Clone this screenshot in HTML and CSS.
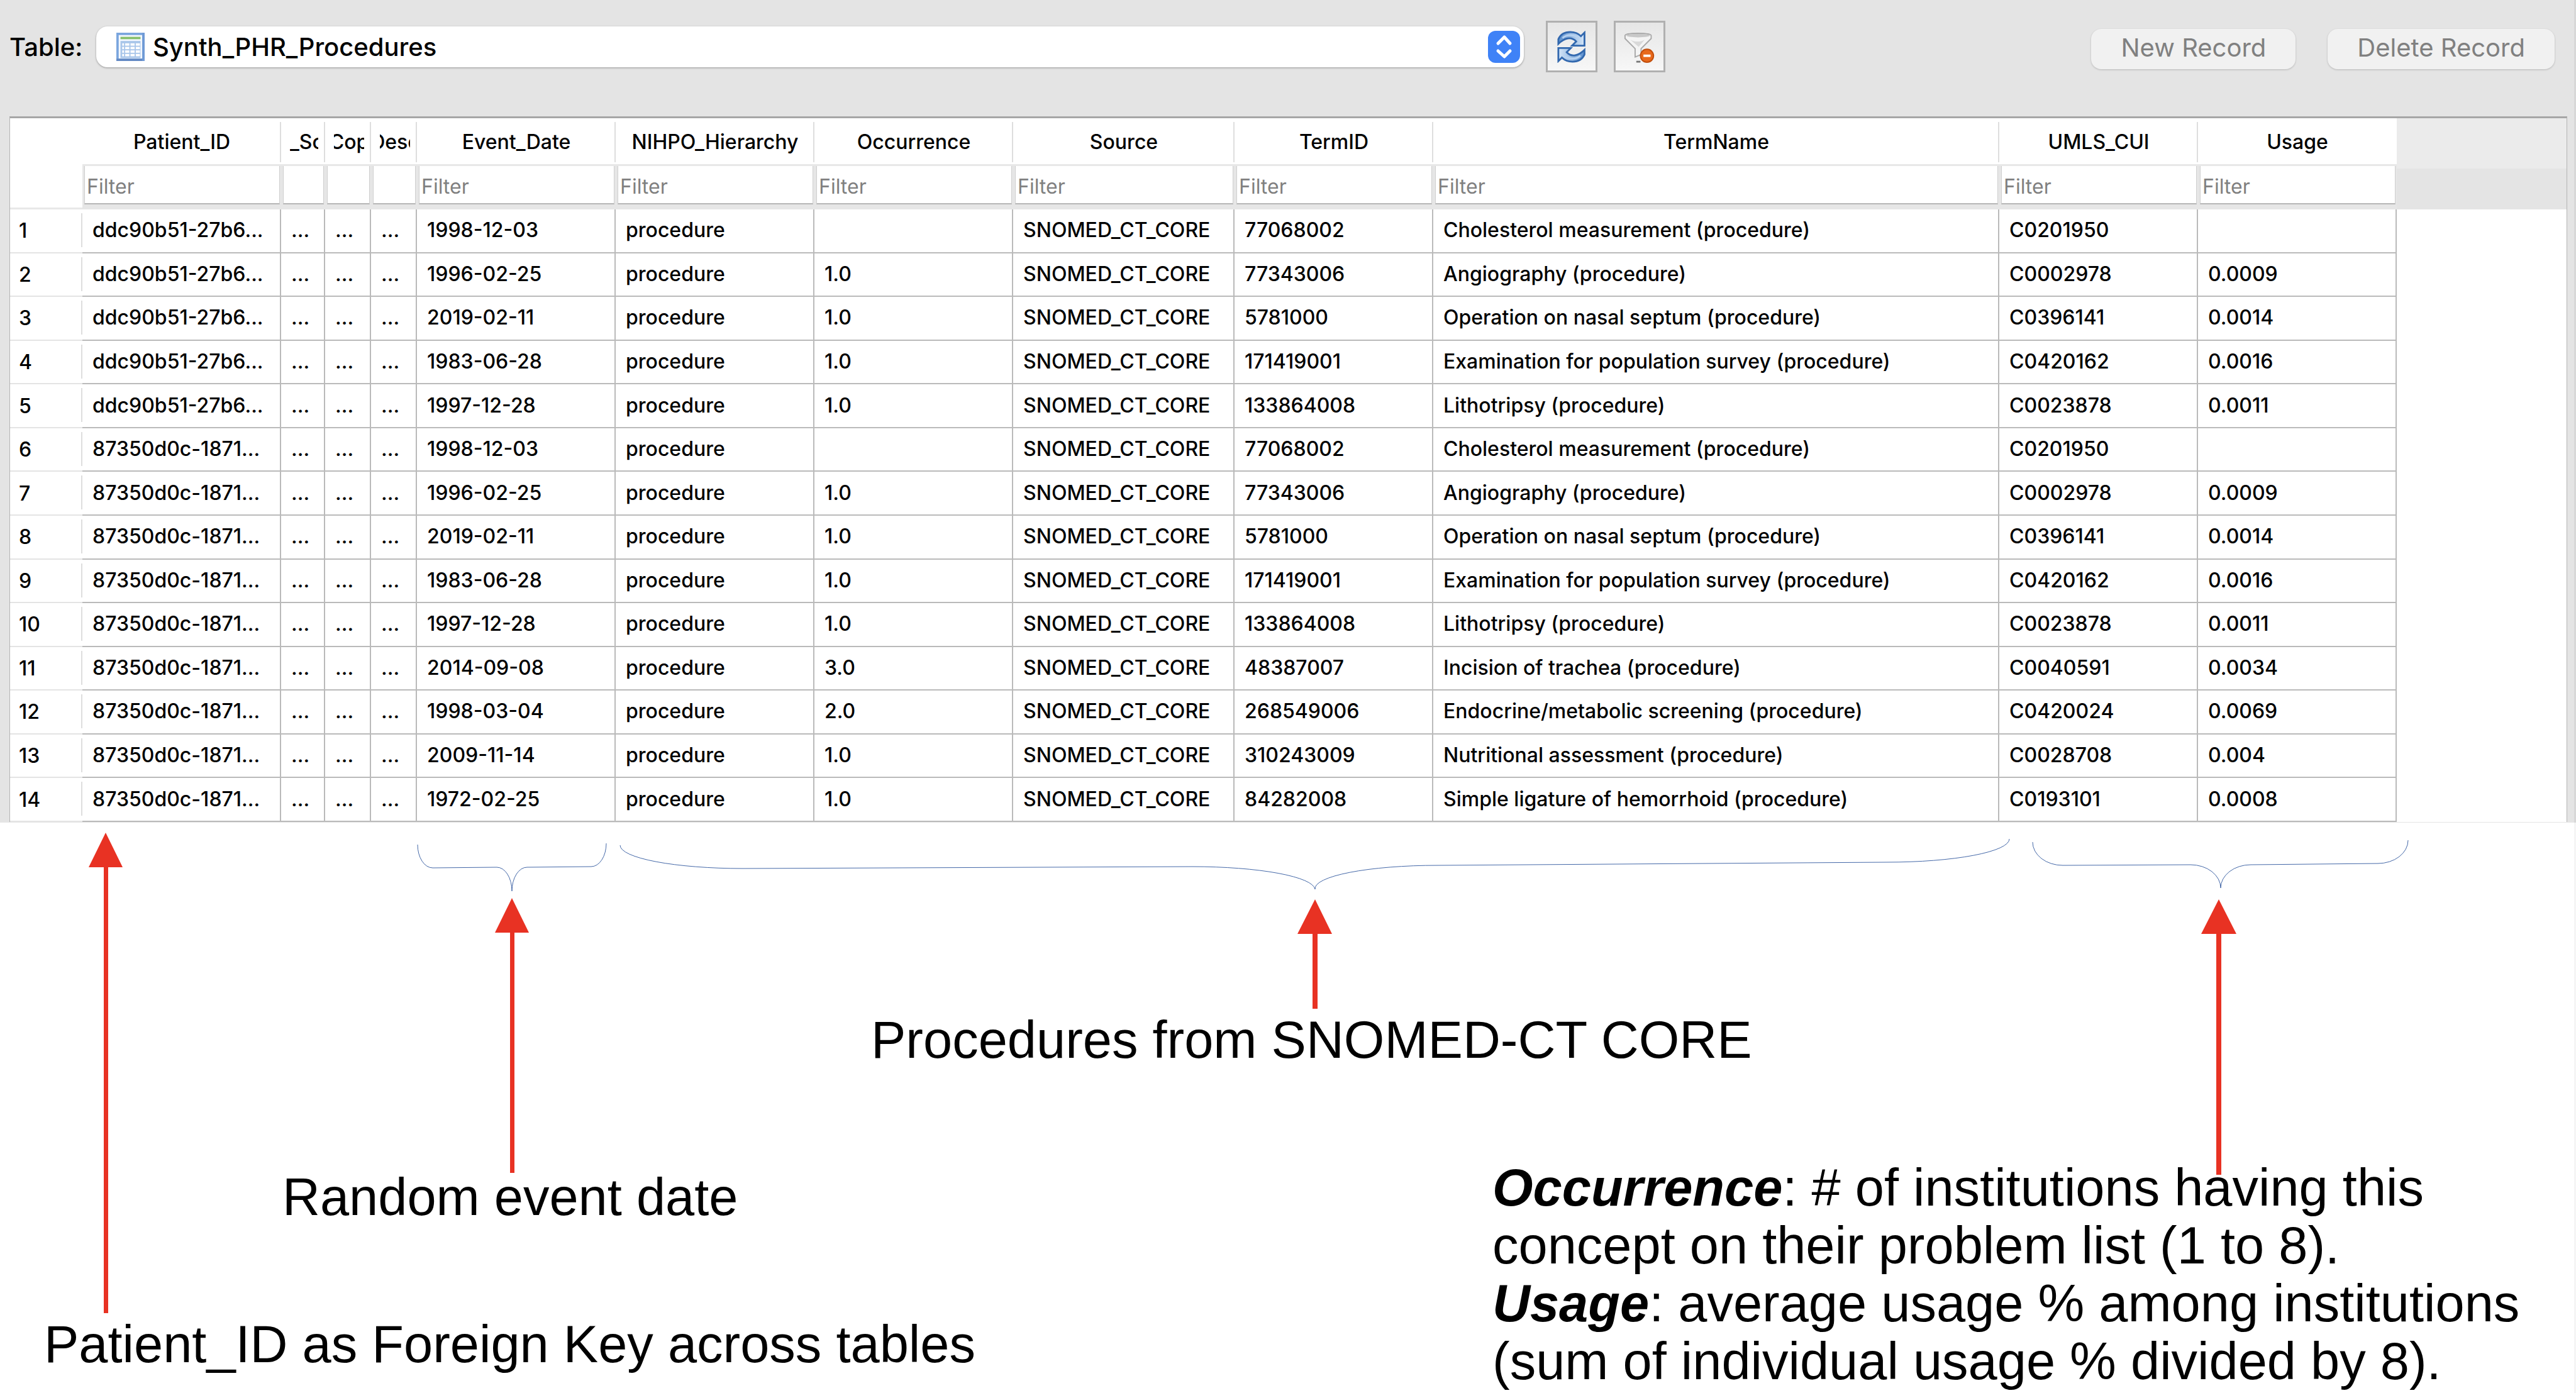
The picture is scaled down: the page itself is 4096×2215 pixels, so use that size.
FILE: index.html
```html
<!DOCTYPE html>
<html lang="en">
<head>
<meta charset="utf-8">
<title>Synth_PHR_Procedures</title>
<link rel="stylesheet" href="styles.css">
</head>
<body>
<main>
<section class="browser">
<div class="toolbar">
<label class="toolbar-label" for="table-select">Table:</label>
<div class="select-box">
<svg class="table-icon" viewBox="0 0 48 48" aria-hidden="true"><rect x="2" y="2" width="44" height="44" fill="#f4f8fd" stroke="#7ba6de" stroke-width="4"/><rect y="44" width="48" height="4" fill="#6389c4"/><rect x="44" width="4" height="48" fill="#6f9ad6"/><rect x="7" y="7" width="34" height="4" fill="#86c06c"/><rect x="7" y="14" width="34" height="29" fill="#a9c6ea"/><g fill="#fff"><rect x="10" y="18" width="3" height="4"/><rect x="15" y="18" width="7" height="4"/><rect x="24" y="18" width="7" height="4"/><rect x="33" y="18" width="7" height="4"/><rect x="10" y="24" width="3" height="4"/><rect x="15" y="24" width="7" height="4"/><rect x="24" y="24" width="7" height="4"/><rect x="33" y="24" width="7" height="4"/><rect x="10" y="30" width="3" height="4"/><rect x="15" y="30" width="7" height="4"/><rect x="24" y="30" width="7" height="4"/><rect x="33" y="30" width="7" height="4"/><rect x="10" y="36" width="3" height="4"/><rect x="15" y="36" width="7" height="4"/><rect x="24" y="36" width="7" height="4"/><rect x="33" y="36" width="7" height="4"/></g></svg>
<select class="table-select" id="table-select"><option>Synth_PHR_Procedures</option></select>
<svg class="select-arrows" viewBox="0 0 51 51" aria-hidden="true"><rect width="51" height="51" rx="12" fill="#3f82f7"/><path d="M16 20L26 10L35 20M16 32L26 41L35 32" fill="none" stroke="#fff" stroke-width="5" stroke-linecap="round" stroke-linejoin="round"/></svg>
</div>
<button class="tool-button" type="button" aria-label="Refresh"><svg viewBox="0 0 48 54" aria-hidden="true"><defs><linearGradient id="blue" x1="0" x2="1"><stop offset="0" stop-color="#5b8fcd"/><stop offset="1" stop-color="#d5e6f8"/></linearGradient><linearGradient id="blue-back" x1="1" x2="0"><stop offset="0" stop-color="#5b8fcd"/><stop offset="1" stop-color="#d5e6f8"/></linearGradient></defs><g stroke="#3268ae" stroke-width="3"><path d="M2 22V14C6 5 14 2 22 2C30 2 36 5 40 9L46 3V25H25L32 18C24 9 12 12 2 22Z" fill="url(#blue)"/><path d="M46 32V40C42 49 34 52 26 52C18 52 12 49 8 45L2 51V29H23L16 36C24 45 36 42 46 32Z" fill="url(#blue-back)"/></g><path d="M9 12C17 5 29 6 37 13M39 42C31 49 19 48 11 41" fill="none" stroke="#b7d2f0" stroke-width="3"/></svg></button>
<button class="tool-button" type="button" aria-label="Clear filters"><svg viewBox="0 0 52 54" aria-hidden="true"><path d="M2 8C2 3 46 3 46 8V13L29 30V40L19 44V30L2 13Z" fill="#f4f4f4" stroke="#a8a8a8" stroke-width="2"/><ellipse cx="24" cy="8" rx="20" ry="3" fill="#c8c8c8"/><path d="M11 15C18 19 28 19 35 15L25 27Z" fill="#d9d9d9"/><path d="M21 52H28" stroke="#777" stroke-width="3"/><circle cx="39" cy="42" r="11" fill="#e8691c" stroke="#c24e0c" stroke-width="2"/><rect x="33" y="40" width="12" height="4" fill="#fff"/></svg></button>
<div class="record-actions"><button class="record-button" type="button" disabled>New Record</button><button class="record-button" type="button" disabled>Delete Record</button></div>
</div>
<div class="grid-frame">
<table class="grid">
<colgroup><col class="c-num"><col class="c-std"><col class="c-cut"><col class="c-cut wide"><col class="c-cut wide"><col class="c-std"><col class="c-std"><col class="c-std"><col class="c-source"><col class="c-std"><col class="c-name"><col class="c-std"><col class="c-std"><col></colgroup>
<thead>
<tr class="titles"><th class="corner" rowspan="2"></th><th>Patient_ID</th><th><span class="cut start">_Sc</span></th><th><span class="cut">Cop</span></th><th><span class="cut">Desc</span></th><th>Event_Date</th><th>NIHPO_Hierarchy</th><th>Occurrence</th><th>Source</th><th>TermID</th><th>TermName</th><th>UMLS_CUI</th><th class="last">Usage</th><th class="filler" rowspan="2"></th></tr>
<tr class="filters"><td><input type="text" placeholder="Filter" aria-label="Filter Patient_ID"></td><td><input type="text" aria-label="Filter column 2"></td><td><input type="text" aria-label="Filter column 3"></td><td><input type="text" aria-label="Filter column 4"></td><td><input type="text" placeholder="Filter" aria-label="Filter Event_Date"></td><td><input type="text" placeholder="Filter" aria-label="Filter NIHPO_Hierarchy"></td><td><input type="text" placeholder="Filter" aria-label="Filter Occurrence"></td><td><input type="text" placeholder="Filter" aria-label="Filter Source"></td><td><input type="text" placeholder="Filter" aria-label="Filter TermID"></td><td><input type="text" placeholder="Filter" aria-label="Filter TermName"></td><td><input type="text" placeholder="Filter" aria-label="Filter UMLS_CUI"></td><td><input type="text" placeholder="Filter" aria-label="Filter Usage"></td></tr>
</thead>
<tbody>
<tr><th>1</th><td>ddc90b51-27b6...</td><td>...</td><td>...</td><td>...</td><td>1998-12-03</td><td>procedure</td><td></td><td>SNOMED_CT_CORE</td><td>77068002</td><td>Cholesterol measurement (procedure)</td><td>C0201950</td><td></td></tr>
<tr><th>2</th><td>ddc90b51-27b6...</td><td>...</td><td>...</td><td>...</td><td>1996-02-25</td><td>procedure</td><td>1.0</td><td>SNOMED_CT_CORE</td><td>77343006</td><td>Angiography (procedure)</td><td>C0002978</td><td>0.0009</td></tr>
<tr><th>3</th><td>ddc90b51-27b6...</td><td>...</td><td>...</td><td>...</td><td>2019-02-11</td><td>procedure</td><td>1.0</td><td>SNOMED_CT_CORE</td><td>5781000</td><td>Operation on nasal septum (procedure)</td><td>C0396141</td><td>0.0014</td></tr>
<tr><th>4</th><td>ddc90b51-27b6...</td><td>...</td><td>...</td><td>...</td><td>1983-06-28</td><td>procedure</td><td>1.0</td><td>SNOMED_CT_CORE</td><td>171419001</td><td>Examination for population survey (procedure)</td><td>C0420162</td><td>0.0016</td></tr>
<tr><th>5</th><td>ddc90b51-27b6...</td><td>...</td><td>...</td><td>...</td><td>1997-12-28</td><td>procedure</td><td>1.0</td><td>SNOMED_CT_CORE</td><td>133864008</td><td>Lithotripsy (procedure)</td><td>C0023878</td><td>0.0011</td></tr>
<tr><th>6</th><td>87350d0c-1871...</td><td>...</td><td>...</td><td>...</td><td>1998-12-03</td><td>procedure</td><td></td><td>SNOMED_CT_CORE</td><td>77068002</td><td>Cholesterol measurement (procedure)</td><td>C0201950</td><td></td></tr>
<tr><th>7</th><td>87350d0c-1871...</td><td>...</td><td>...</td><td>...</td><td>1996-02-25</td><td>procedure</td><td>1.0</td><td>SNOMED_CT_CORE</td><td>77343006</td><td>Angiography (procedure)</td><td>C0002978</td><td>0.0009</td></tr>
<tr><th>8</th><td>87350d0c-1871...</td><td>...</td><td>...</td><td>...</td><td>2019-02-11</td><td>procedure</td><td>1.0</td><td>SNOMED_CT_CORE</td><td>5781000</td><td>Operation on nasal septum (procedure)</td><td>C0396141</td><td>0.0014</td></tr>
<tr><th>9</th><td>87350d0c-1871...</td><td>...</td><td>...</td><td>...</td><td>1983-06-28</td><td>procedure</td><td>1.0</td><td>SNOMED_CT_CORE</td><td>171419001</td><td>Examination for population survey (procedure)</td><td>C0420162</td><td>0.0016</td></tr>
<tr><th>10</th><td>87350d0c-1871...</td><td>...</td><td>...</td><td>...</td><td>1997-12-28</td><td>procedure</td><td>1.0</td><td>SNOMED_CT_CORE</td><td>133864008</td><td>Lithotripsy (procedure)</td><td>C0023878</td><td>0.0011</td></tr>
<tr><th>11</th><td>87350d0c-1871...</td><td>...</td><td>...</td><td>...</td><td>2014-09-08</td><td>procedure</td><td>3.0</td><td>SNOMED_CT_CORE</td><td>48387007</td><td>Incision of trachea (procedure)</td><td>C0040591</td><td>0.0034</td></tr>
<tr><th>12</th><td>87350d0c-1871...</td><td>...</td><td>...</td><td>...</td><td>1998-03-04</td><td>procedure</td><td>2.0</td><td>SNOMED_CT_CORE</td><td>268549006</td><td>Endocrine/metabolic screening (procedure)</td><td>C0420024</td><td>0.0069</td></tr>
<tr><th>13</th><td>87350d0c-1871...</td><td>...</td><td>...</td><td>...</td><td>2009-11-14</td><td>procedure</td><td>1.0</td><td>SNOMED_CT_CORE</td><td>310243009</td><td>Nutritional assessment (procedure)</td><td>C0028708</td><td>0.004</td></tr>
<tr><th>14</th><td>87350d0c-1871...</td><td>...</td><td>...</td><td>...</td><td>1972-02-25</td><td>procedure</td><td>1.0</td><td>SNOMED_CT_CORE</td><td>84282008</td><td>Simple ligature of hemorrhoid (procedure)</td><td>C0193101</td><td>0.0008</td></tr>
</tbody>
</table>
</div>
</section>
<section class="notes">
<svg class="marks" viewBox="0 0 4096 907" aria-hidden="true">
<g fill="none" stroke="#4468a8" stroke-width="1">
<path d="M664 35A24 37 0 0 0 688 72L790 71A24 38 0 0 1 814 109A24 38 0 0 1 838 71L940 70A24 37 0 0 0 964 33"/>
<path d="M986 36A195 37 0 0 0 1181 73L1896 70A195 37 0 0 1 2091 106A195 37 0 0 1 2286 68L3000 63A195 37 0 0 0 3195 26"/>
<path d="M3232 31A48 37 0 0 0 3280 68L3483 67A48 37 0 0 1 3531 104A48 37 0 0 1 3579 67L3781 65A48 37 0 0 0 3829 28"/>
</g>
<g fill="#e83223">
<path d="M168 16L195 71H172V780H165V71H141Z"/>
<path d="M814 120L841 175H818V557H811V175H787Z"/>
<path d="M2091 122L2118 177H2095V296H2087V177H2063Z"/>
<path d="M3528 122L3556 177H3532V560H3524V177H3500Z"/>
</g>
</svg>
<p class="note note-core">Procedures from SNOMED-CT CORE</p>
<p class="note note-date">Random event date</p>
<p class="note note-key">Patient_ID as Foreign Key across tables</p>
<p class="note note-usage"><strong><em>Occurrence</em></strong>: # of institutions having this<br>concept on their problem list (1 to 8).<br><strong><em>Usage</em></strong>: average usage % among institutions<br>(sum of individual usage % divided by 8).</p>
</section>
</main>
</body>
</html>
```
FILE: styles.css
```css
* { box-sizing: border-box; }

body {
  margin: 0;
  background: #fff;
  color: #000;
  font-family: Inter, "Liberation Sans", sans-serif;
}

.browser {
  padding-bottom: 1px;
  background: #e4e4e4;
  box-shadow: inset -3px 0 #d7d7d7;
}

/* Toolbar */
.toolbar {
  display: flex;
  align-items: center;
  height: 185px;
  padding: 0 34px 37px 15px;
  font-size: 40px;
  font-weight: 500;
}

.toolbar-label { width: 138px; }

.select-box {
  display: flex;
  align-items: center;
  width: 2270px;
  height: 65px;
  padding: 0 6px 0 32px;
  background: #fff;
  border-radius: 18px;
  box-shadow: 0 1px 3px rgba(0, 0, 0, .35);
}

.table-icon { width: 45px; height: 45px; }

.table-select {
  flex: 1;
  appearance: none;
  border: 0;
  background: none;
  padding: 0 0 0 13px;
  font: inherit;
  color: #000;
}

.select-arrows { width: 51px; height: 51px; }

.tool-button {
  display: flex;
  align-items: center;
  justify-content: center;
  width: 82px;
  height: 82px;
  margin-left: 26px;
  padding: 0;
  border: 3px solid #b0b0b0;
  background: linear-gradient(#e6e6e6, #f7f7f7);
}

.select-box + .tool-button { margin-left: 35px; }
.tool-button svg { height: 51px; }

.record-actions {
  display: flex;
  gap: 51px;
  margin-left: auto;
  padding-top: 7px;
}

.record-button {
  height: 64px;
  padding: 0 47px 5px;
  border: 0;
  border-radius: 16px;
  background: #f1f1f1;
  color: #808080;
  font: inherit;
  font-weight: 400;
  box-shadow: 0 1px 3px rgba(0, 0, 0, .2);
}

/* Data grid */
.grid-frame {
  margin: 0 14px 0 15px;
  border: 1px solid #b4b4b4;
  border-top: 3px solid #a6a6a6;
  border-bottom: 0;
  background: #fff;
}

.grid {
  width: 100%;
  height: 1119px;
  border-collapse: separate;
  border-spacing: 0;
  table-layout: fixed;
  font-size: 32px;
  font-weight: 500;
  line-height: 40px;
}

.c-num { width: 115px; }
.c-std { width: 316px; }
.c-cut { width: 70px; }
.c-cut.wide { width: 73px; }
.c-source { width: 352px; }
.c-name { width: 900px; }

.grid th,
.grid td {
  overflow: hidden;
  padding: 0;
  font-weight: 500;
  white-space: nowrap;
}

.grid .titles th {
  height: 76px;
  padding-top: 2px;
  border-bottom: 3px solid #e8e8e8;
  background: linear-gradient(#dedede, #dedede) right 6px / 2px 64px no-repeat;
  text-align: center;
}

.grid .titles .corner { background: #fff; }
.grid .titles .last { background: none; }

.grid .titles .filler {
  border: 0;
  background: linear-gradient(#ebebeb 80px, #e4e4e4 80px);
}

/* Titles wider than their narrow columns are clipped on both sides. */
.cut {
  display: flex;
  justify-content: center;
  margin: 0 11px 0 14px;
  overflow: hidden;
}

.cut.start { justify-content: flex-start; }

.grid .filters td {
  height: 69px;
  padding: 0 2px 8px 3px;
  background: #e6e6e6;
}

.filters input {
  display: block;
  width: 100%;
  height: 61px;
  padding: 5px 0 0 3px;
  border: 1px solid #cfcfcf;
  border-width: 0 1px 2px;
  border-bottom-color: #b6b6b6;
  background: #fff;
  font: inherit;
  font-weight: 400;
}

.filters input::placeholder { color: #808080; opacity: 1; }

.grid tbody th {
  padding: 1px 0 0 14px;
  border-bottom: 2px solid #e4e4e4;
  background: linear-gradient(#dedede, #dedede) right 6px / 2px 54px no-repeat;
  text-align: left;
}

.grid tbody td {
  padding: 0 0 1px 16px;
  border-right: 2px solid #bababa;
  border-bottom: 2px solid #bababa;
}

/* Annotations */
.notes {
  position: relative;
  box-shadow: inset -3px 0 #f5f5f5;
  font-family: "Liberation Sans", Arial, sans-serif;
  font-size: 83px;
  line-height: 92px;
}

.marks { display: block; width: 100%; }

.note {
  position: absolute;
  margin: 0;
  white-space: nowrap;
}

.note-core { left: 1385px; top: 300px; }
.note-date { left: 449px; top: 550px; }
.note-key { left: 70px; top: 784px; }
.note-usage { left: 2373px; top: 535px; }
```
